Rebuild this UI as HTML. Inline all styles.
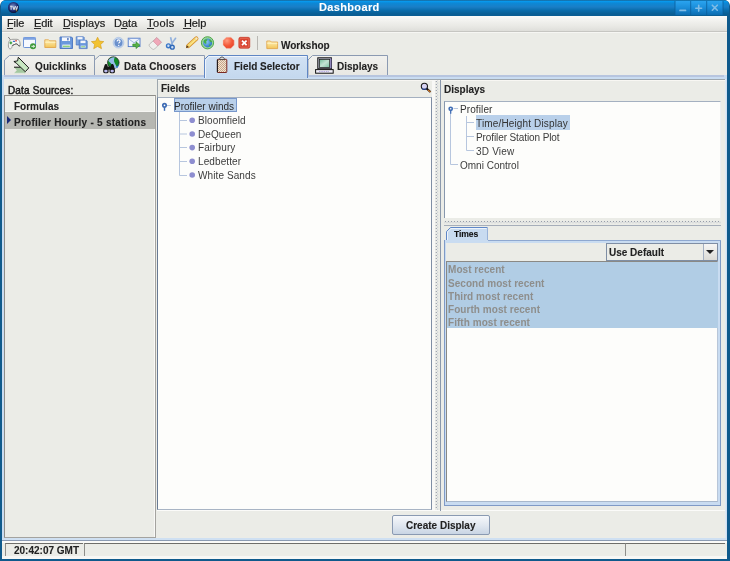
<!DOCTYPE html>
<html><head><meta charset="utf-8">
<style>
*{box-sizing:border-box;margin:0;padding:0}
html,body{width:730px;height:561px;overflow:hidden;background:#ffffff}
body{position:relative;font-family:"Liberation Sans",sans-serif;font-size:10px;color:#222}
.a{position:absolute}
.t{position:absolute;white-space:pre;line-height:12px;font-size:10px;will-change:transform}
.b{font-weight:bold;-webkit-text-stroke:0.1px}
u{text-decoration:underline;text-underline-offset:0.5px}
</style></head><body>
<div class="a" style="left:0px;top:0px;width:730px;height:561px;background:#0f5a8c;border-radius:6px 6px 0 0"></div>
<div class="a" style="left:1px;top:0px;width:728px;height:15.6px;background:linear-gradient(#1a6494 0,#0898ec 1.5px,#0c88d6 3px,#1a7ec6 7px,#0a6eae 10px,#0a5e94 14px);border-radius:5px 5px 0 0"></div>
<div class="t b" style="left:318.5px;top:0.8px;font-size:11px;color:#fff;letter-spacing:0.35px">Dashboard</div>
<svg class="a" style="left:672px;top:0" width="58" height="16" viewBox="672 0 58 16">
 <defs><linearGradient id="gTB" x1="0" y1="0" x2="0" y2="1"><stop offset="0" stop-color="#2aa4f0"/><stop offset="0.5" stop-color="#1a8cd8"/><stop offset="1" stop-color="#0c6cb0"/></linearGradient></defs>
 <rect x="675" y="1" width="48" height="14" fill="url(#gTB)"/>
 <path d="M675 1V15M690.7 1V15M706.7 1V15M723 1V15" stroke="#0b5e9a" stroke-width="0.8"/>
 <path d="M680 10.4h5.5" stroke="#80bce6" stroke-width="1.7" stroke-linecap="round"/>
 <path d="M698.7 5.3v5.8M695.8 8.2h5.8" stroke="#80bce6" stroke-width="1.6" stroke-linecap="round"/>
 <path d="M712.3 5.2l5 5M717.3 5.2l-5 5" stroke="#80bce6" stroke-width="1.6" stroke-linecap="round"/>
</svg>
<svg class="a" style="left:7px;top:1px" width="14" height="14" viewBox="7 1 14 14">
 <defs><radialGradient id="gApp" cx="0.45" cy="0.4" r="0.6"><stop offset="0" stop-color="#7890c8"/><stop offset="0.7" stop-color="#1a2a70"/><stop offset="1" stop-color="#0a0f30"/></radialGradient></defs>
 <circle cx="13.5" cy="7.5" r="5.5" fill="url(#gApp)"/>
 <path d="M10 6.2h2.2M11.1 6.2v3.6M12.8 6.2l1.2 3.6 1.2-3.6M15.6 6.2l1 3.6 1-3.6" stroke="#f0f0f0" stroke-width="0.9" fill="none"/>
 <path d="M15.5 9l1.5 2.5" stroke="#9a8a40" stroke-width="1"/>
</svg>
<div class="a" style="left:2px;top:15.6px;width:725px;height:16px;background:linear-gradient(#fbfbfa 0,#f3f3f0 4px,#e9e9e5 10px,#dededa 15px)"></div>
<div class="a" style="left:2px;top:31px;width:725px;height:1px;background:#c6c6c2"></div>
<div class="t " style="left:7.2px;top:16.6px;font-size:11px;color:#1a1a1a;letter-spacing:-0.1px;-webkit-text-stroke:0.2px">File</div>
<div class="a" style="left:7.0px;top:27.9px;width:6.4px;height:1px;background:#2a2a2a"></div>
<div class="t " style="left:34.4px;top:16.6px;font-size:11px;color:#1a1a1a;letter-spacing:-0.1px;-webkit-text-stroke:0.2px">Edit</div>
<div class="a" style="left:34.199999999999996px;top:27.9px;width:6.9px;height:1px;background:#2a2a2a"></div>
<div class="t " style="left:62.8px;top:16.6px;font-size:11px;color:#1a1a1a;letter-spacing:0.1px;-webkit-text-stroke:0.2px">Displays</div>
<div class="a" style="left:62.599999999999994px;top:27.9px;width:7.4px;height:1px;background:#2a2a2a"></div>
<div class="t " style="left:114px;top:16.6px;font-size:11px;color:#1a1a1a;letter-spacing:0px;-webkit-text-stroke:0.2px">Data</div>
<div class="a" style="left:121.39999999999999px;top:27.9px;width:6.0px;height:1px;background:#2a2a2a"></div>
<div class="t " style="left:147.2px;top:16.6px;font-size:11px;color:#1a1a1a;letter-spacing:0.4px;-webkit-text-stroke:0.2px">Tools</div>
<div class="a" style="left:147.0px;top:27.9px;width:6.6000000000000005px;height:1px;background:#2a2a2a"></div>
<div class="t " style="left:183.6px;top:16.6px;font-size:11px;color:#1a1a1a;letter-spacing:-0.1px;-webkit-text-stroke:0.2px">Help</div>
<div class="a" style="left:183.4px;top:27.9px;width:7.4px;height:1px;background:#2a2a2a"></div>
<div class="a" style="left:2px;top:32px;width:725px;height:527px;background:#ebece7"></div>
<div class="a" style="left:2px;top:32px;width:725px;height:1px;background:#f6f6f3"></div>
<div class="a" style="left:2px;top:75px;width:725px;height:466px;background:#c9dcf1"></div>
<div class="a" style="left:4px;top:75px;width:720px;height:2px;background:#b7c5df"></div>
<div class="a" style="left:2px;top:538px;width:725px;height:2px;background:#cfe0f2"></div>
<div class="a" style="left:2px;top:539.8px;width:725px;height:1.2px;background:#8b9bb3"></div>
<div class="a" style="left:2px;top:541px;width:725px;height:2px;background:#fafaf8"></div>
<div class="a" style="left:2px;top:556px;width:725px;height:3px;background:#f7f7f5"></div>
<div class="a" style="left:4px;top:79px;width:721px;height:459px;background:#ebece7"></div>
<div class="a" style="left:725px;top:79px;width:2px;height:459px;background:linear-gradient(90deg,#e4edf6,#c9dcf1)"></div>
<svg class="a" style="left:0;top:30px" width="400" height="50" viewBox="0 30 400 50">
 <defs>
  <linearGradient id="gBlue" x1="0" y1="0" x2="0" y2="1"><stop offset="0" stop-color="#9fc0ee"/><stop offset="1" stop-color="#3f6fc4"/></linearGradient>
  <linearGradient id="gFold" x1="0" y1="0" x2="0" y2="1"><stop offset="0" stop-color="#fff2b8"/><stop offset="1" stop-color="#f2c458"/></linearGradient>
  <radialGradient id="gHelp" cx="0.4" cy="0.35" r="0.7"><stop offset="0" stop-color="#c8daf4"/><stop offset="1" stop-color="#4f7cc4"/></radialGradient>
  <radialGradient id="gRed" cx="0.35" cy="0.3" r="0.75"><stop offset="0" stop-color="#ff9c80"/><stop offset="0.6" stop-color="#f45a3a"/><stop offset="1" stop-color="#e8452a"/></radialGradient>
  <radialGradient id="gGlobe" cx="0.4" cy="0.4" r="0.6"><stop offset="0" stop-color="#8cc8f0"/><stop offset="1" stop-color="#2f78c8"/></radialGradient>
 </defs>
 <!-- gamepad -->
 <path d="M8.3 37L11 40.6" stroke="#7a7a7a" stroke-width="1" fill="none"/>
 <path d="M9 41.5C9.5 40 11 39.3 13 39.3L17 39.3C18.8 39.3 19.8 41 20 43L20.2 45.5C19.5 46.2 18.5 46 18 45C17.3 43.8 16 43.5 14.5 44.5L12.3 45.5C12 47 11.8 48.5 10.5 48.8C9.2 49 8.5 48 8.4 46C8.3 44.5 8.5 42.5 9 41.5Z" fill="#f6f6f4" stroke="#8a8a88" stroke-width="0.8"/>
 <path d="M20.2 45.5C19.5 46.2 18.5 46 18 45C17.3 43.8 16 43.5 14.5 44.5L12.3 45.5" stroke="#4a4a4a" stroke-width="0.9" fill="none"/>
 <path d="M9.5 42.9h2.7M10.85 41.5v2.8" stroke="#3aa040" stroke-width="1.3"/>
 <rect x="12.8" y="40.7" width="2.3" height="1.3" rx="0.5" fill="#3f70d0"/>
 <rect x="15.2" y="39.9" width="1.7" height="1.7" rx="0.6" fill="#e04a40"/>
 <!-- window+green -->
 <rect x="23.5" y="37.5" width="12" height="10" rx="0.8" fill="#f6f9ff" stroke="#6d93d6" stroke-width="1"/>
 <rect x="23.5" y="37.5" width="12" height="2.3" fill="#7ca2e2"/>
 <circle cx="33" cy="46.3" r="3" fill="#3f9a3a"/>
 <path d="M31.4 46.3h3M33.3 45l1.2 1.3-1.2 1.3" stroke="#fff" stroke-width="0.9" fill="none"/>
 <!-- folder -->
 <path d="M44.8 39.8h3.8l1 1h6.2v6.7h-11z" fill="url(#gFold)" stroke="#e0a040" stroke-width="0.8"/>
 <path d="M45.2 42.3h10.4" stroke="#fff6c8" stroke-width="0.8"/>
 <!-- floppy -->
 <path d="M60 37h11.5l1 1v10.5h-12.5z" fill="#6a98dc" stroke="#4a74c0" stroke-width="0.9"/>
 <rect x="62" y="37.4" width="8" height="3.6" fill="#f6f8fc"/>
 <rect x="67.2" y="38" width="1.4" height="2.4" fill="#4a70b8"/>
 <rect x="62.3" y="44.6" width="8" height="3" fill="#f0f4fa"/>
 <rect x="62.8" y="45.6" width="7" height="1.6" fill="#8ed07c"/>
 <!-- copy floppies -->
 <path d="M76.2 36.8h7.3l0.7 0.7v7.5h-8z" fill="#7aa4e0" stroke="#4a74c0" stroke-width="0.7"/>
 <rect x="77.5" y="37.1" width="5" height="2.3" fill="#f4f6fa"/>
 <path d="M79.2 40.3h7.3l0.7 0.7v7.6h-8z" fill="#6a98dc" stroke="#4a74c0" stroke-width="0.7"/>
 <rect x="80.5" y="40.6" width="5" height="2.5" fill="#f4f6fa"/>
 <rect x="80.7" y="45.6" width="5" height="2" fill="#e8eef8"/>
 <rect x="81.2" y="46.2" width="4" height="1.1" fill="#8ed07c"/>
 <!-- star -->
 <path d="M97.6 37.2l1.9 3.9 4.3 0.5-3.2 2.9 0.9 4.2-3.9-2.2-3.9 2.2 0.9-4.2-3.2-2.9 4.3-0.5z" fill="#f2c230" stroke="#d49a1a" stroke-width="0.6"/>
 <!-- help -->
 <circle cx="118.5" cy="42.7" r="5.4" fill="#c4d6ee" stroke="#a4bce0" stroke-width="0.6"/>
 <circle cx="118.5" cy="42.7" r="4" fill="#6a90cc"/>
 <path d="M117.1 41.5c0-1 0.6-1.6 1.5-1.6s1.5 0.6 1.5 1.4c0 1.1-1.4 1.1-1.4 2.3" stroke="#fff" stroke-width="1.1" fill="none"/>
 <circle cx="118.7" cy="45.4" r="0.65" fill="#fff"/>
 <!-- mail -->
 <rect x="128.2" y="38.2" width="11.8" height="8.4" fill="#eef3fc" stroke="#4f78c8" stroke-width="0.9"/>
 <path d="M128.2 38.6l5.9 4.2 5.9-4.2" stroke="#8aa8dc" stroke-width="0.8" fill="none"/>
 <path d="M132.8 44h3.2v-2.2l4 3.4-4 3.4v-2.2h-3.2z" fill="#58b048" stroke="#2f8a2a" stroke-width="0.6" stroke-linejoin="round"/>
 <!-- eraser -->
 <path d="M156.8 37.6l4.6 4.6-6.8 6.8c-0.8 0.6-1.7 0.6-2.4 0l-2.6-2.6c-0.6-0.7-0.6-1.6 0-2.4z" fill="#f0f0ee" stroke="#a8a8a6" stroke-width="0.7"/>
 <path d="M156.8 37.6l4.6 4.6-3.6 3.6-4.6-4.6z" fill="#f0a8b8" stroke="#d48a9c" stroke-width="0.6"/>
 <!-- scissors -->
 <path d="M170.6 37.3L172.3 44.6M175.9 37.8L171.2 44.6" stroke="#a0bce2" stroke-width="1.7" fill="none"/>
 <path d="M170.6 37.3L172.3 44.6M175.9 37.8L171.2 44.6" stroke="#7a9cd0" stroke-width="0.5" fill="none"/>
 <circle cx="168.4" cy="45.8" r="1.9" fill="#cfe0f4" stroke="#3a78c8" stroke-width="1.4"/>
 <circle cx="172.3" cy="47.2" r="1.9" fill="#cfe0f4" stroke="#2f68b8" stroke-width="1.4"/>
 <!-- pencil -->
 <path d="M188.2 46L196.3 38.6" stroke="#d08a30" stroke-width="4.3" stroke-linecap="round"/>
 <path d="M188.2 46L196.3 38.6" stroke="#f6d66a" stroke-width="2.9" stroke-linecap="round"/>
 <path d="M189.5 45.2L195.5 39.6" stroke="#fff0a8" stroke-width="0.7"/>
 <circle cx="196.4" cy="38.6" r="1.1" fill="#f4e4d0"/>
 <path d="M185.9 48.2L186.9 45.2L188.9 47.1Z" fill="#5a3a1a"/>
 <!-- globe -->
 <circle cx="207.5" cy="42.8" r="6.1" fill="#9ad896" stroke="#3f9f3f" stroke-width="0.9"/>
 <circle cx="207.6" cy="42.9" r="4.5" fill="url(#gGlobe)"/>
 <path d="M204 40.2c1.2-1.2 2.8-1.3 3.6-0.6-0.3 1-1.4 1.2-1.4 2.4 0.6 0.8 0.2 1.8-0.8 1.8-0.8-0.7-1.6-1.2-1.7-2.3z M209.6 39.4c1.3 0.2 2.4 1.3 2.5 2.6-0.8 0.6-1.6 0.2-2.1-0.5-0.6-0.3-0.9-1.2-0.4-2.1z M209 44.5c0.8-0.3 1.6 0 1.8 0.6-0.4 0.8-1.2 1.1-1.9 0.8z" fill="#46b046"/>
 <!-- red stop -->
 <path d="M226.3 37.2h4.6l3.3 3.3v4.6l-3.3 3.3h-4.6l-3.3-3.3v-4.6z" fill="url(#gRed)" stroke="#f4c8bc" stroke-width="0.5"/>
 <!-- red x -->
 <rect x="238.8" y="37.3" width="11" height="11" rx="1.6" fill="#d8422e" stroke="#c23420" stroke-width="0.6"/>
 <rect x="239.9" y="38.4" width="8.8" height="8.8" rx="1" fill="none" stroke="#ec7a66" stroke-width="0.6"/>
 <path d="M242 40.6l4.6 4.6M246.6 40.6l-4.6 4.6" stroke="#fff" stroke-width="1.7"/>
 <!-- workshop folder -->
 <path d="M266.8 41h3.6l1 1h6.2v6.6h-10.8z" fill="url(#gFold)" stroke="#e0a040" stroke-width="0.8"/>
 <path d="M267.2 43.3h10.2" stroke="#fff6c8" stroke-width="0.8"/>

</svg>
<div class="a" style="left:257px;top:36px;width:1px;height:14px;background:#b9b8b3"></div>
<div class="t b" style="left:281px;top:40px;">Workshop</div>
<svg class="a" style="left:0;top:50px" width="400" height="30" viewBox="0 50 400 30">
 <defs>
  <linearGradient id="gTab" x1="0" y1="0" x2="0" y2="1"><stop offset="0" stop-color="#f1f1ee"/><stop offset="1" stop-color="#e8e7e3"/></linearGradient>
  <linearGradient id="gTabS" x1="0" y1="0" x2="0" y2="1"><stop offset="0" stop-color="#d2e2f4"/><stop offset="1" stop-color="#c4d8ee"/></linearGradient>
 </defs>
 <path d="M4.5 75V60L9.5 55.5H94.5V75" fill="url(#gTab)" stroke="#8b9ab2" stroke-width="1"/>
 <path d="M94.5 75V60L99.5 55.5H204.5V75" fill="url(#gTab)" stroke="#8b9ab2" stroke-width="1"/>
 <path d="M308 75V60L312.5 55.5H387.5V75" fill="url(#gTab)" stroke="#8b9ab2" stroke-width="1"/>
 <path d="M204.5 78V59.5L208.5 55.5H307.5V78" fill="url(#gTabS)" stroke="#5f86c4" stroke-width="1"/>
 <path d="M205.5 78V60L209 56.5H306.5" fill="none" stroke="#eef4fb" stroke-width="1"/>
</svg>
<div class="t b" style="left:35px;top:60.9px;letter-spacing:0.1px">Quicklinks</div>
<div class="t b" style="left:123.5px;top:60.9px;letter-spacing:0.15px">Data Choosers</div>
<div class="t b" style="left:234.2px;top:60.9px;letter-spacing:0px">Field Selector</div>
<div class="t b" style="left:337px;top:60.9px;">Displays</div>
<svg class="a" style="left:0;top:50px" width="400" height="30" viewBox="0 50 400 30">
 <!-- tab icons -->
 <!-- quicklinks ribbon -->
 <path d="M14 67.2H20.8L25.2 71.6V73.2H14L16.9 70.2Z" fill="#a4c8a0"/>
 <path d="M14 67.2H20.8" stroke="#111" stroke-width="1"/>
 <path d="M14 73.2H24" stroke="#e8f0e8" stroke-width="0.6"/>
 <path d="M18.3 57.3L28.8 67.9L25.3 71.7L16.3 63.2L13.9 61.5L17.6 60.9Z" fill="#c8e8c2" stroke="#111" stroke-width="0.95" stroke-linejoin="miter"/>
 <!-- data choosers -->
 <circle cx="113.3" cy="62.6" r="5.8" fill="#128a2a" stroke="#1a1a1a" stroke-width="0.7"/>
 <path d="M108.3 60.8C109.3 58.4 111.8 57 114.8 57.2C114 59 113.6 60.6 114.5 62.5C115.5 64.5 116.6 66 116.9 68.1C115.6 68.6 114.1 68.3 113 67.6C112.5 65.6 111.5 63.6 110 62.6C109.4 62 108.8 61.4 108.3 60.8Z" fill="#94bce8"/>
 <path d="M116.2 66.6C117.6 66 118.5 65 119 63.8C118.9 65.9 118.1 67.4 116.9 68.4Z" fill="#2a78c8"/>
 <path d="M104.5 65.5C104.7 64.5 105.3 64 106 64S107.3 64.5 107.5 65.5L108.6 69.5V72C108.6 72.9 107.5 73.3 106 73.3S103.2 72.9 103.2 72V69.5Z" fill="#151515"/>
 <path d="M110.8 65.5C111 64.5 111.6 64 112.3 64S113.6 64.5 113.8 65.5L114.9 69.5V72C114.9 72.9 113.8 73.3 112.3 73.3S109.5 72.9 109.5 72V69.5Z" fill="#151515"/>
 <rect x="107.8" y="66.5" width="2.4" height="3.2" fill="#151515"/>
 <ellipse cx="105.9" cy="71.1" rx="1.75" ry="1.45" fill="#bcbcf0"/>
 <ellipse cx="112.2" cy="71.1" rx="1.75" ry="1.45" fill="#bcbcf0"/>
 <!-- clipboard -->
 <defs><pattern id="pChk" width="2" height="2" patternUnits="userSpaceOnUse"><rect width="2" height="2" fill="#f2e2d2"/><rect width="1" height="1" fill="#c8a888"/><rect x="1" y="1" width="1" height="1" fill="#c8a888"/></pattern></defs>
 <rect x="217.4" y="59.3" width="9.4" height="13.2" rx="0.6" fill="url(#pChk)" stroke="#7a2a22" stroke-width="1"/>
 <path d="M217.4 59.6v12.8" stroke="#1a1a1a" stroke-width="1"/>
 <path d="M219.6 59.6c0-1.6 1-2.6 2.4-2.6s2.4 1 2.4 2.6z" fill="#dcdcdc" stroke="#333" stroke-width="0.8"/>
 <!-- monitor -->
 <defs><linearGradient id="gScr" x1="0" y1="0" x2="1" y2="1"><stop offset="0" stop-color="#70bc98"/><stop offset="0.5" stop-color="#c4e4d4"/><stop offset="1" stop-color="#78c0a0"/></linearGradient></defs>
 <rect x="317.8" y="57.8" width="13.6" height="11" fill="#b4b4c4" stroke="#111" stroke-width="1"/>
 <path d="M330.9 58.4V68.3" stroke="#8a7cd0" stroke-width="1"/>
 <rect x="319.4" y="59.4" width="10.3" height="8" fill="url(#gScr)" stroke="#1a1a1a" stroke-width="0.7"/>
 <rect x="315.6" y="69.6" width="17.6" height="3.6" fill="#f0eef8" stroke="#111" stroke-width="1"/>
 <path d="M319 71.5h10" stroke="#b0a4e0" stroke-width="0.9" stroke-dasharray="1.5 0.8"/>
</svg>
<div class="t " style="left:8.2px;top:85px;letter-spacing:0.15px;color:#1a1a1a;-webkit-text-stroke:0.45px">Data Sources:</div>
<div class="a" style="left:4px;top:95px;width:152px;height:443px;background:#ebece7;border:1px solid #8e8d89;border-right-color:#a4a39f;border-bottom-color:#a4a39f"></div>
<div class="a" style="left:154px;top:96px;width:1px;height:441px;background:#f9f9f7"></div>
<div class="a" style="left:5px;top:96px;width:149px;height:15px;background:#eeefea"></div>
<div class="a" style="left:5px;top:111px;width:150px;height:1px;background:#f6f6f3"></div>
<div class="a" style="left:5px;top:112px;width:150px;height:17.3px;background:#b6b7b2"></div>
<div class="a" style="left:7px;top:116px;width:0px;height:0px;border-left:4px solid #1a2a78;border-top:4px solid transparent;border-bottom:4px solid transparent"></div>
<div class="t b" style="left:14px;top:100.5px;">Formulas</div>
<div class="t b" style="left:14.3px;top:117px;letter-spacing:0.26px">Profiler Hourly - 5 stations</div>
<div class="a" style="left:157px;top:79px;width:568px;height:1px;background:#9ea7ae"></div>
<div class="a" style="left:157px;top:79px;width:1px;height:432px;background:#9ea7ae"></div>
<div class="a" style="left:158px;top:80px;width:567px;height:1px;background:#f8f7f3"></div>
<div class="a" style="left:157px;top:510px;width:568px;height:1px;background:#fbfbf9"></div>
<div class="t b" style="left:160.5px;top:83.3px;">Fields</div>
<!-- search icon -->
<svg class="a" style="left:418px;top:80px" width="16" height="16" viewBox="418 80 16 16">
 <circle cx="424.4" cy="86.3" r="3.1" fill="#d8d4f4" stroke="#1a1a1a" stroke-width="1.1"/>
 <path d="M422 88.3a3.1 3.1 0 0 0 4.6 0" stroke="#2a4aa0" stroke-width="1.1" fill="none"/>
 <path d="M426.6 88.6l3.9 3.5" stroke="#111" stroke-width="2"/>
 <path d="M427.9 89.8l2.5 2.2" stroke="#e07a20" stroke-width="1.1"/>
</svg>

<div class="a" style="left:157px;top:97px;width:275px;height:413px;background:#fdfdfb;border:1px solid #a4b0c0;border-left-color:#687a94;border-right-color:#7f8ea4;border-bottom-color:#a8b4c4"></div>
<svg class="a" style="left:157px;top:97px" width="276" height="413" viewBox="157 97 276 413">
 <g fill="none" stroke="#b7c6de" stroke-width="1">
  <path d="M167 105.5H171"/>
  <path d="M179.5 112V175.5M179.5 120.5H187M179.5 134H187M179.5 147.5H187M179.5 161.5H187M179.5 175.5H187"/>
 </g>
 <g fill="none" stroke="#3f6db5" stroke-width="1.3">
  <circle cx="164.5" cy="105.3" r="1.7" stroke-width="1.7"/>
  <path d="M164.5 107V110.8" stroke-width="1.4"/>
 </g>
 <g fill="#8e8ed0">
  <circle cx="192.2" cy="120.3" r="2.8"/><circle cx="192.2" cy="134" r="2.8"/><circle cx="192.2" cy="147.6" r="2.8"/><circle cx="192.2" cy="161.3" r="2.8"/><circle cx="192.2" cy="175" r="2.8"/>
 </g>
</svg>
<div class="a" style="left:174px;top:98px;width:63px;height:14px;background:#b9d0ea;border:1px solid #7898cc"></div>
<div class="t " style="left:174px;top:100.6px;color:#2a2a2a">Profiler winds</div>
<div class="t " style="left:197.8px;top:114.9px;color:#3c3c3c;letter-spacing:0.1px">Bloomfield</div>
<div class="t " style="left:197.8px;top:128.6px;color:#3c3c3c;letter-spacing:0.1px">DeQueen</div>
<div class="t " style="left:197.8px;top:142.3px;color:#3c3c3c;letter-spacing:0.1px">Fairbury</div>
<div class="t " style="left:197.8px;top:156.0px;color:#3c3c3c;letter-spacing:0.1px">Ledbetter</div>
<div class="t " style="left:197.8px;top:169.7px;color:#3c3c3c;letter-spacing:0.1px">White Sands</div>
<div class="a" style="left:432px;top:80px;width:3px;height:430px;background:#f8f8f6"></div>
<svg class="a" style="left:435px;top:80px" width="5" height="430" viewBox="435 80 5 430"><defs><pattern id="pDotV" x="435" y="80" width="5" height="3" patternUnits="userSpaceOnUse"><circle cx="1.3" cy="1.5" r="0.62" fill="#848c9e"/><circle cx="2.7" cy="0" r="0.55" fill="#b0b8c6"/><circle cx="2.7" cy="3" r="0.55" fill="#b0b8c6"/></pattern></defs><rect x="435" y="80" width="5" height="430" fill="url(#pDotV)"/></svg>
<div class="a" style="left:440px;top:80px;width:1px;height:431px;background:#8a98ac"></div>
<div class="t b" style="left:444.2px;top:83.6px;">Displays</div>
<div class="a" style="left:444px;top:100.8px;width:277px;height:117.2px;background:#fdfdfb;border:1px solid #a4b0c0;border-left-color:#8797ad;border-right-color:#eceef1;border-bottom:none"></div>
<svg class="a" style="left:444px;top:100px" width="277" height="119" viewBox="444 100 277 119">
 <g fill="none" stroke="#b7c6de" stroke-width="1">
  <path d="M453.5 108.5H458M450.5 113V164.5H458"/>
  <path d="M466.5 116V150.5M466.5 122.5H474M466.5 136.5H474M466.5 150.5H474"/>
 </g>
 <g fill="none" stroke="#3f6db5" stroke-width="1.3">
  <circle cx="450.7" cy="108.8" r="1.6" stroke-width="1.6"/>
  <path d="M450.7 110.5V113.8" stroke-width="1.3"/>
 </g>
</svg>
<div class="a" style="left:475.6px;top:115.2px;width:94.4px;height:14.4px;background:#b9d0ea"></div>
<div class="t " style="left:459.8px;top:104.3px;color:#333;letter-spacing:0.1px">Profiler</div>
<div class="t " style="left:476px;top:118px;color:#333;letter-spacing:0.15px">Time/Height Display</div>
<div class="t " style="left:476px;top:132.3px;color:#3c3c3c;letter-spacing:-0.1px">Profiler Station Plot</div>
<div class="t " style="left:476px;top:146px;color:#3c3c3c;letter-spacing:0.2px">3D View</div>
<div class="t " style="left:459.8px;top:160.3px;color:#3c3c3c">Omni Control</div>
<svg class="a" style="left:444px;top:219px" width="277" height="5" viewBox="444 219 277 5"><defs><pattern id="pDotH" x="444" y="219" width="3" height="5" patternUnits="userSpaceOnUse"><circle cx="1.5" cy="2.6" r="0.65" fill="#8a92a2"/><circle cx="0" cy="3.8" r="0.55" fill="#b4bac6"/><circle cx="3" cy="3.8" r="0.55" fill="#b4bac6"/></pattern></defs><rect x="444" y="219" width="277" height="5" fill="url(#pDotH)"/></svg>
<div class="a" style="left:444px;top:225px;width:277px;height:1px;background:#a6aeba"></div>
<svg class="a" style="left:444px;top:225px" width="50" height="18" viewBox="444 225 50 18">
 <path d="M446.5 242V231.5L450.5 227.5H487.5V242Z" fill="#c8dbf0"/>
 <path d="M446.5 242V231.5L450.5 227.5H487.5" fill="none" stroke="#6088c8" stroke-width="1"/>
 <path d="M487.5 228V240" fill="none" stroke="#98b2d8" stroke-width="1"/>
 <path d="M447.5 242V232L451 228.5H486.5" fill="none" stroke="#eef4fb" stroke-width="1"/>
</svg>
<div class="t b" style="left:454.3px;top:228.6px;font-size:8.6px;line-height:10px;letter-spacing:-0.1px;color:#111">Times</div>
<div class="a" style="left:444px;top:240px;width:276.5px;height:266px;background:#c9dcf1;border:1px solid #7f9ac6;border-top:none"></div>
<div class="a" style="left:488px;top:239.5px;width:232.5px;height:1px;background:#8ea8d0"></div>
<div class="a" style="left:446px;top:242.8px;width:272px;height:18.2px;background:#ebece7"></div>
<div class="a" style="left:606px;top:243px;width:112px;height:18px;background:#ebece7;border:1px solid #7f8ea4"></div>
<div class="a" style="left:703px;top:244px;width:14px;height:16px;background:linear-gradient(#f6f6f4,#dcdbd6);border-left:1px solid #a4b0c2"></div>
<div class="a" style="left:706px;top:250px;width:0px;height:0px;border-top:4px solid #222;border-left:4px solid transparent;border-right:4px solid transparent"></div>
<div class="t b" style="left:608.6px;top:246.7px;">Use Default</div>
<div class="a" style="left:446px;top:261px;width:272px;height:241px;background:#fdfdfb;border:1px solid #8a8985;border-right-color:#b8c6d8;border-bottom-color:#a8b8cc"></div>
<div class="a" style="left:447px;top:262px;width:271px;height:66.2px;background:#b1cde5"></div>
<div class="t b" style="left:448px;top:264.3px;color:#8e8e8c;-webkit-text-stroke:0;letter-spacing:0.05px">Most recent</div>
<div class="t b" style="left:448px;top:277.5px;color:#8e8e8c;-webkit-text-stroke:0;letter-spacing:0.05px">Second most recent</div>
<div class="t b" style="left:448px;top:290.7px;color:#8e8e8c;-webkit-text-stroke:0;letter-spacing:0.05px">Third most recent</div>
<div class="t b" style="left:448px;top:303.9px;color:#8e8e8c;-webkit-text-stroke:0;letter-spacing:0.05px">Fourth most recent</div>
<div class="t b" style="left:448px;top:317.1px;color:#8e8e8c;-webkit-text-stroke:0;letter-spacing:0.05px">Fifth most recent</div>
<div class="a" style="left:392px;top:515px;width:98px;height:20px;background:linear-gradient(#f6f8fb,#dfe6ef 55%,#c9d5e4);border:1px solid #8a9ab2;border-radius:2px"></div>
<div class="t b" style="left:406px;top:520px;">Create Display</div>
<div class="a" style="left:5px;top:543px;width:78px;height:13px;border-top:1px solid #6e6e6a;border-left:1px solid #8e8e8a"></div>
<div class="a" style="left:84px;top:543px;width:541px;height:13px;border-top:1px solid #6e6e6a;border-left:1px solid #8e8e8a"></div>
<div class="a" style="left:625px;top:543px;width:100px;height:13px;border-top:1px solid #6e6e6a;border-left:1px solid #8e8e8a"></div>
<div class="t b" style="left:14px;top:544.7px;">20:42:07 GMT</div>
</body></html>
